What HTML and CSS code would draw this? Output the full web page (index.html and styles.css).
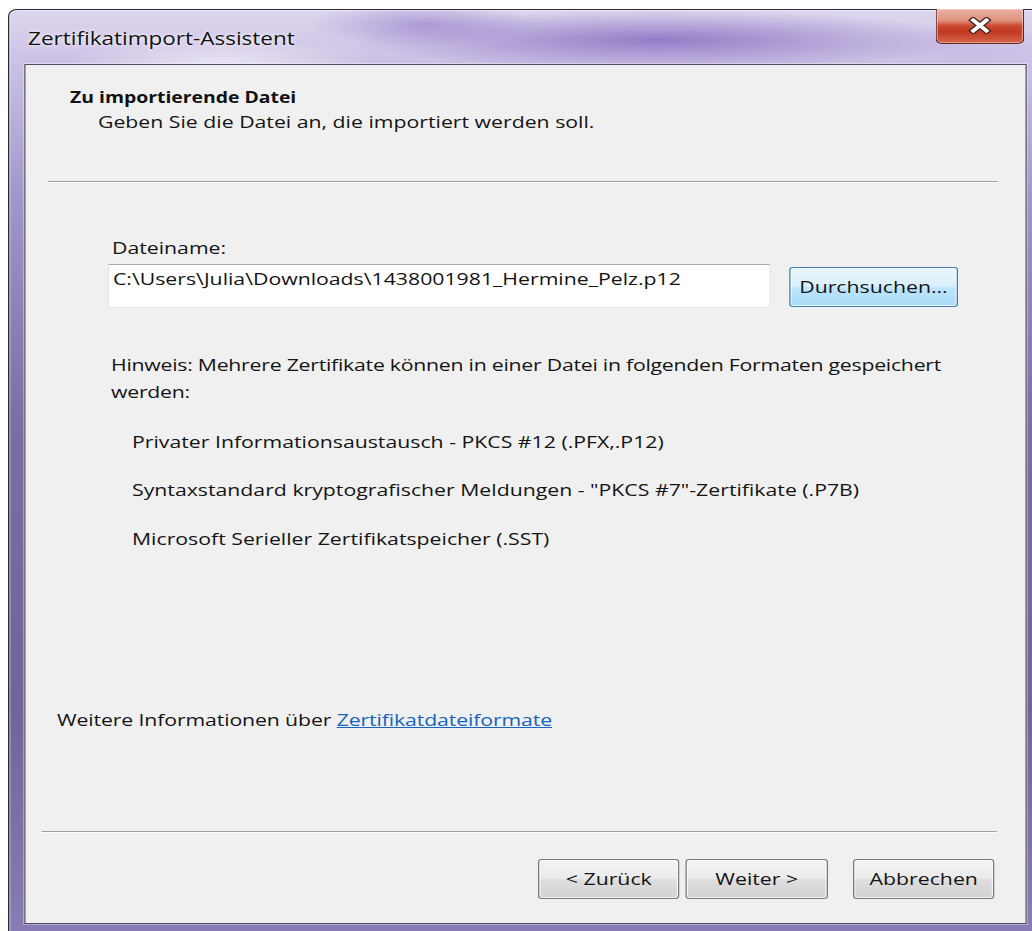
FILE: index.html
```html
<!DOCTYPE html>
<html lang="de">
<head>
<meta charset="utf-8">
<title>Zertifikatimport-Assistent</title>
<link rel="stylesheet" href="styles.css">
</head>
<body>
<div class="window">
  <div class="titlebar">
    <span class="title">Zertifikatimport-Assistent</span>
    <button class="close" type="button" aria-label="Schließen">
      <svg class="close-glyph" viewBox="0 0 18 16" aria-hidden="true">
        <path class="x-edge" d="M4 3 L14 13 M14 3 L4 13"/>
        <path class="x-face" d="M4 3 L14 13 M14 3 L4 13"/>
      </svg>
    </button>
  </div>

  <div class="client">
    <div class="wiz-body">
      <div class="wiz-head">
        <h1 class="wiz-title">Zu importierende Datei</h1>
        <p class="wiz-subtitle">Geben Sie die Datei an, die importiert werden soll.</p>
      </div>
      <hr class="etched etched-top">

      <label class="field-label" for="file-name">Dateiname:</label>
      <div class="file-row">
        <input class="textbox" id="file-name" type="text" readonly value="C:\Users\Julia\Downloads\1438001981_Hermine_Pelz.p12">
        <button class="btn btn-hot" type="button">Durchsuchen...</button>
      </div>

      <p class="note">Hinweis: Mehrere Zertifikate können in einer Datei in folgenden Formaten gespeichert werden:</p>
      <ul class="formats">
        <li>Privater Informationsaustausch - PKCS #12 (.PFX,.P12)</li>
        <li>Syntaxstandard kryptografischer Meldungen - "PKCS #7"-Zertifikate (.P7B)</li>
        <li>Microsoft Serieller Zertifikatspeicher (.SST)</li>
      </ul>

      <p class="more">Weitere Informationen über <a class="link" href="#">Zertifikatdateiformate</a></p>
    </div>

    <div class="wiz-foot">
      <hr class="etched etched-bottom">
      <div class="buttons">
        <button class="btn" type="button">&lt; Zurück</button>
        <button class="btn" type="button">Weiter &gt;</button>
        <button class="btn btn-cancel" type="button">Abbrechen</button>
      </div>
    </div>
  </div>
</div>
</body>
</html>
```

FILE: styles.css
```css
html,
body {
  margin: 0;
  height: 100%;
  overflow: hidden;
  background: #ffffff;
}

body {
  font-family: "Open Sans", "Noto Sans", sans-serif;
  color: #141414;
}

/* Dialog is laid out at its native width and widened 1.25x, like a stretched classic dialog */
.window {
  margin: 9px 0 0 8px;
  width: 828px;
  height: 930px;
  box-sizing: border-box;
  display: flex;
  flex-direction: column;
  transform: scaleX(1.25);
  transform-origin: 0 0;
  border: 1px solid #2e293a;
  border-bottom: 0;
  border-radius: 7px 7px 0 0;
  box-shadow: inset 0 0 0 1px rgba(255, 255, 255, 0.45);
  background:
    radial-gradient(ellipse 250px 30px at 520px 30px, rgba(125, 100, 188, 0.75), rgba(125, 100, 188, 0) 100%),
    radial-gradient(ellipse 90px 22px at 330px 14px, rgba(140, 118, 196, 0.55), rgba(140, 118, 196, 0) 100%),
    radial-gradient(ellipse 120px 24px at 170px 52px, rgba(255, 255, 255, 0.55), rgba(255, 255, 255, 0) 100%),
    radial-gradient(ellipse 80px 26px at 765px 40px, rgba(196, 184, 230, 0.6), rgba(196, 184, 230, 0) 100%),
    linear-gradient(180deg, #ddd6ee 0px, #cdc2e5 50px, #a497cb 180px, #7b6ca3 420px, #72649a 700px, #8a7cb4 100%);
}

/* ---------- title bar ---------- */
.titlebar {
  height: 54px;
  flex: none;
  display: flex;
  align-items: flex-start;
  justify-content: space-between;
}

.title {
  padding: 16px 0 0 15px;
  font-size: 18px;
  line-height: 24px;
  color: #111111;
  text-shadow: 0 0 6px rgba(255, 255, 255, 0.9), 0 0 2px rgba(255, 255, 255, 0.8);
}

.close {
  margin: -1px 14.2px 0 0;
  width: 70.4px;
  height: 35px;
  padding: 0 0 2px;
  box-sizing: border-box;
  display: flex;
  align-items: center;
  justify-content: center;
  border: 1px solid #5c2b23;
  border-top: 0;
  border-radius: 0 0 5px 5px;
  background: linear-gradient(180deg, #eab0a3 0%, #df917f 34%, #c9472e 50%, #c23a20 68%, #d4664d 100%);
  box-shadow: inset 0 0 0 1px rgba(255, 230, 220, 0.45);
}

.close-glyph {
  width: 19px;
  height: 17px;
  fill: none;
}

.x-edge {
  stroke: #4a2620;
  stroke-width: 5.6;
  stroke-linecap: square;
}

.x-face {
  stroke: #ffffff;
  stroke-width: 3.2;
  stroke-linecap: square;
}

/* ---------- client area ---------- */
.client {
  margin-left: 11.8px;
  width: 802.4px;
  height: 860px;
  box-sizing: border-box;
  flex: none;
  display: flex;
  flex-direction: column;
  border: 1px solid #544d68;
  background: #f0f0f0;
  box-shadow: 0 0 0 1px rgba(255, 255, 255, 0.35);
  font-size: 17px;
  line-height: 22px;
}

.wiz-body {
  flex: 1;
  display: flex;
  flex-direction: column;
  align-items: flex-start;
}

.wiz-head {
  padding: 22px 0 0 35.8px;
}

.wiz-title {
  margin: 0;
  font-size: 15.5px;
  line-height: 20px;
  font-weight: 700;
  color: #111111;
}

.wiz-subtitle {
  margin: 4px 0 0 22.4px;
}

.etched {
  margin: 0;
  height: 0;
  border: 0;
  border-top: 1px solid #a0a0a0;
  border-bottom: 1px solid #ffffff;
  align-self: stretch;
}

.etched-top {
  margin: 48px 22.4px 0 18.2px;
}

.field-label {
  display: block;
  margin: 54.2px 0 0 69.4px;
}

.file-row {
  margin: 4.8px 0 0 66.2px;
  display: flex;
  align-items: flex-start;
  gap: 15.2px;
}

.textbox {
  width: 529.6px;
  height: 44px;
  box-sizing: border-box;
  margin: 0;
  padding: 0 3px 15px;
  font: inherit;
  color: #141414;
  background: #ffffff;
  border: 1px solid #e2e6ec;
  border-top-color: #a9abb2;
  border-left-color: #dde1e7;
  border-radius: 1px;
  outline: none;
}

.btn {
  width: 113.6px;
  height: 40px;
  box-sizing: border-box;
  margin: 0;
  padding: 0;
  font: inherit;
  color: #141414;
  border: 1px solid #7a7a7a;
  border-radius: 3px;
  background: linear-gradient(180deg, #f3f3f3 0%, #ebebeb 48%, #dedede 52%, #d2d2d2 100%);
  box-shadow: inset 0 0 0 1px rgba(255, 255, 255, 0.75);
}

.btn-hot {
  width: 135.2px;
  margin-top: 3px;
  border-color: #3c7fb1;
  background: linear-gradient(180deg, #eaf6fd 0%, #d9f0fc 48%, #bee6fd 52%, #a9daf5 100%);
}

.note {
  margin: 43.5px 0 0 68.6px;
  width: 720px;
  line-height: 27px;
  letter-spacing: -0.2px;
}

.formats {
  list-style: none;
  margin: 25.5px 0 0 85.4px;
  padding: 0;
  display: flex;
  flex-direction: column;
  gap: 26.5px;
}

.more {
  margin: 159px 0 0 25.4px;
  letter-spacing: -0.1px;
}

.link {
  color: #1763bd;
  text-decoration: underline;
}

/* ---------- footer ---------- */
.wiz-foot {
  flex: none;
  display: flex;
  flex-direction: column;
  padding-bottom: 24px;
}

.etched-bottom {
  margin: 0 23.2px 0 13.4px;
}

.buttons {
  margin: 26px 24.8px 0 0;
  display: flex;
  justify-content: flex-end;
  gap: 4.8px;
}

.btn-cancel {
  margin-left: 15.2px;
}
```
